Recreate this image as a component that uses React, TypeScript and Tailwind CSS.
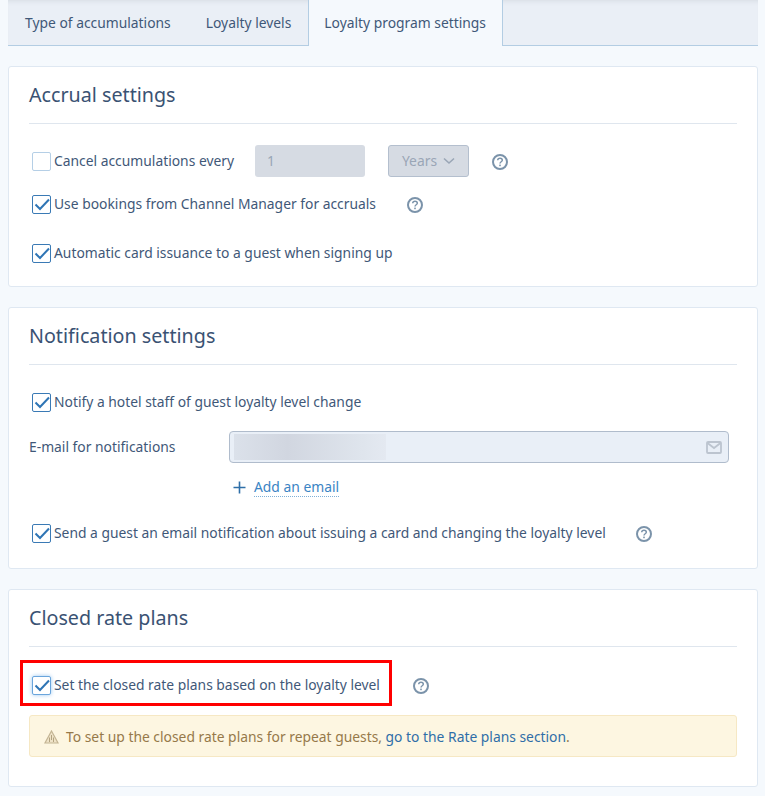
import React from "react";

function Check({ checked = true, glow = false }: { checked?: boolean; glow?: boolean }) {
  return (
    <span
      className={
        "relative flex h-[19px] w-[19px] shrink-0 items-center justify-center rounded-[2px] border bg-white " +
        (glow
          ? "border-[#6aa5dc] shadow-[0_0_4px_#9cc8f0]"
          : checked
            ? "border-[#3a7ab5]"
            : "border-[#b5cfe6]")
      }
    >
      {checked && (
        <svg width="19" height="19" viewBox="0 0 19 19" fill="none" className="absolute left-[-1px] top-[-1px]">
          <path d="M3.5 9.5 L8 14 L17 4.5" stroke="#2f75b5" strokeWidth="2" />
        </svg>
      )}
    </span>
  );
}

function Help({ className = "" }: { className?: string }) {
  return (
    <svg width="16" height="16" viewBox="0 0 16 16" fill="none" className={"mt-[2px] shrink-0 " + className}>
      <circle cx="8" cy="8" r="7" stroke="#7b93aa" strokeWidth="2" />
      <path d="M5.7 6.3 C5.8 4.8 6.8 4.2 8 4.2 C9.3 4.2 10.3 5 10.3 6.2 C10.3 7.7 8 7.8 8 9.5" stroke="#7b93aa" strokeWidth="1.5" />
      <rect x="7.2" y="10.6" width="1.6" height="1.6" fill="#7b93aa" />
    </svg>
  );
}

function Row({ label, className = "", glow = false }: { label: string; className?: string; glow?: boolean }) {
  return (
    <div className={"ml-[3px] flex h-[20px] items-center gap-[3px] " + className}>
      <Check glow={glow} />
      <span className="whitespace-nowrap">{label}</span>
    </div>
  );
}

function Card({ title, className = "", children }: { title: string; className?: string; children: React.ReactNode }) {
  return (
    <section className={"rounded-[3px] border border-[#dfe8f2] bg-white px-5 " + className}>
      <h2 className="flex h-[57px] items-center border-b border-[#dfe6ee] text-[19.7px] font-normal text-[#3a5273]">{title}</h2>
      {children}
    </section>
  );
}

export default function App() {
  return (
    <div className="h-[796px] w-[765px] overflow-hidden bg-[#f5f9fd] pl-2 pr-[7px] text-[13.85px] leading-[20px] text-[#3f5878] [font-family:'Noto_Sans',sans-serif]">
      <nav className="flex h-[46px] items-stretch border-b border-[#b3cde3] bg-[#eaeff6] shadow-[inset_0_5px_5px_-4px_#d5dbe2]">
        <a className="flex items-center pl-[17px] pr-[18px]">Type of accumulations</a>
        <a className="flex items-center px-[17px]">Loyalty levels</a>
        <a className="mb-[-1px] flex items-center border-x border-[#b3cde3] bg-[#f5f9fd] pl-[15px] pr-[16px]">Loyalty program settings</a>
      </nav>

      <Card title="Accrual settings" className="mt-5 h-[221px]">
        <div className="mt-[21px] flex h-[32px] items-center">
          <div className="ml-[3px] flex w-[223px] items-center gap-[3px]">
            <Check checked={false} />
            <span className="whitespace-nowrap">Cancel accumulations every</span>
          </div>
          <div className="flex h-[32px] w-[110px] items-center rounded-[3px] bg-[#d6dbe3] px-3 text-[#9aa6b6]">1</div>
          <div className="ml-[23px] flex h-[32px] w-[81px] items-center justify-center gap-[6px] rounded-[3px] border border-[#b4bfce] bg-[#d6dbe3] text-[#9aa6b6]">
            Years
            <svg width="12" height="8" viewBox="0 0 12 8" fill="none">
              <path d="M1 1.5 L6 6 L11 1.5" stroke="#9aa6b6" strokeWidth="1.6" />
            </svg>
          </div>
          <Help className="ml-[23px]" />
        </div>
        <div className="mt-[17px] flex h-[20px] items-center">
          <Row label="Use bookings from Channel Manager for accruals" />
          <Help className="ml-[31px]" />
        </div>
        <Row label="Automatic card issuance to a guest when signing up" className="mt-[29px]" />
      </Card>

      <Card title="Notification settings" className="mt-5 h-[262px]">
        <Row label="Notify a hotel staff of guest loyalty level change" className="mt-[27px]" />
        <div className="mt-[19px] flex h-[32px] items-center">
          <span className="w-[200px] shrink-0">E-mail for notifications</span>
          <div className="mr-[8px] flex h-[32px] flex-1 items-center justify-between rounded-[4px] border border-[#b0bccc] bg-[#e9eff7] pl-[4px] pr-[6px]">
            <div className="h-[26px] w-[152px] bg-[linear-gradient(90deg,#dbe1ea_0%,#d1d6e0_35%,#dfe5ed_85%,#e4e9f1_100%)]" />
            <svg width="16" height="13" viewBox="0 0 16 13" fill="none">
              <rect x="1" y="1" width="14" height="11" rx="1" stroke="#bcc4cf" strokeWidth="1.8" />
              <path d="M1.5 2 L8 7 L14.5 2" stroke="#bcc4cf" strokeWidth="1.8" />
            </svg>
          </div>
        </div>
        <div className="ml-[204px] mt-[14px] flex h-[20px] items-center gap-[8px] text-[#3a84c4]">
          <svg width="13" height="13" viewBox="0 0 13 13" fill="none">
            <path d="M6.5 0.5 V12.5 M0.5 6.5 H12.5" stroke="#2f6fa8" strokeWidth="1.6" />
          </svg>
          <span className="border-b border-dotted border-[#7fb0d8] leading-[19px]">Add an email</span>
        </div>
        <div className="mt-[26px] flex h-[20px] items-center">
          <Row label="Send a guest an email notification about issuing a card and changing the loyalty level" />
          <Help className="ml-[30px]" />
        </div>
      </Card>

      <Card title="Closed rate plans" className="relative mt-5 h-[198px]">
        <div className="mt-[28px] flex h-[20px] items-center">
          <Row label="Set the closed rate plans based on the loyalty level" glow />
          <Help className="ml-[33px]" />
        </div>
        <div className="mt-[20px] flex h-[42px] items-center gap-[7px] rounded-[3px] border border-[#f6e8c4] bg-[#fdf6e1] pl-[14px] pt-[1px] text-[#96794a]">
          <svg width="15" height="14" viewBox="0 0 15 14" fill="none">
            <path d="M7.5 1 L14 13 H1 Z" stroke="#c4b594" strokeWidth="1.2" fill="#efe3c8" />
            <path d="M7.5 5 V10 M5.5 7.5 V12 M9.5 7.5 V12" stroke="#b3a37f" strokeWidth="1" />
          </svg>
          <span className="whitespace-nowrap">
            To set up the closed rate plans for repeat guests, <a className="text-[#2f6ea8]">go to the Rate plans section</a>.
          </span>
        </div>
        <div className="absolute left-[11px] top-[70px] h-[46px] w-[372px] border-[3px] border-[#ff0000]" />
      </Card>
    </div>
  );
}
